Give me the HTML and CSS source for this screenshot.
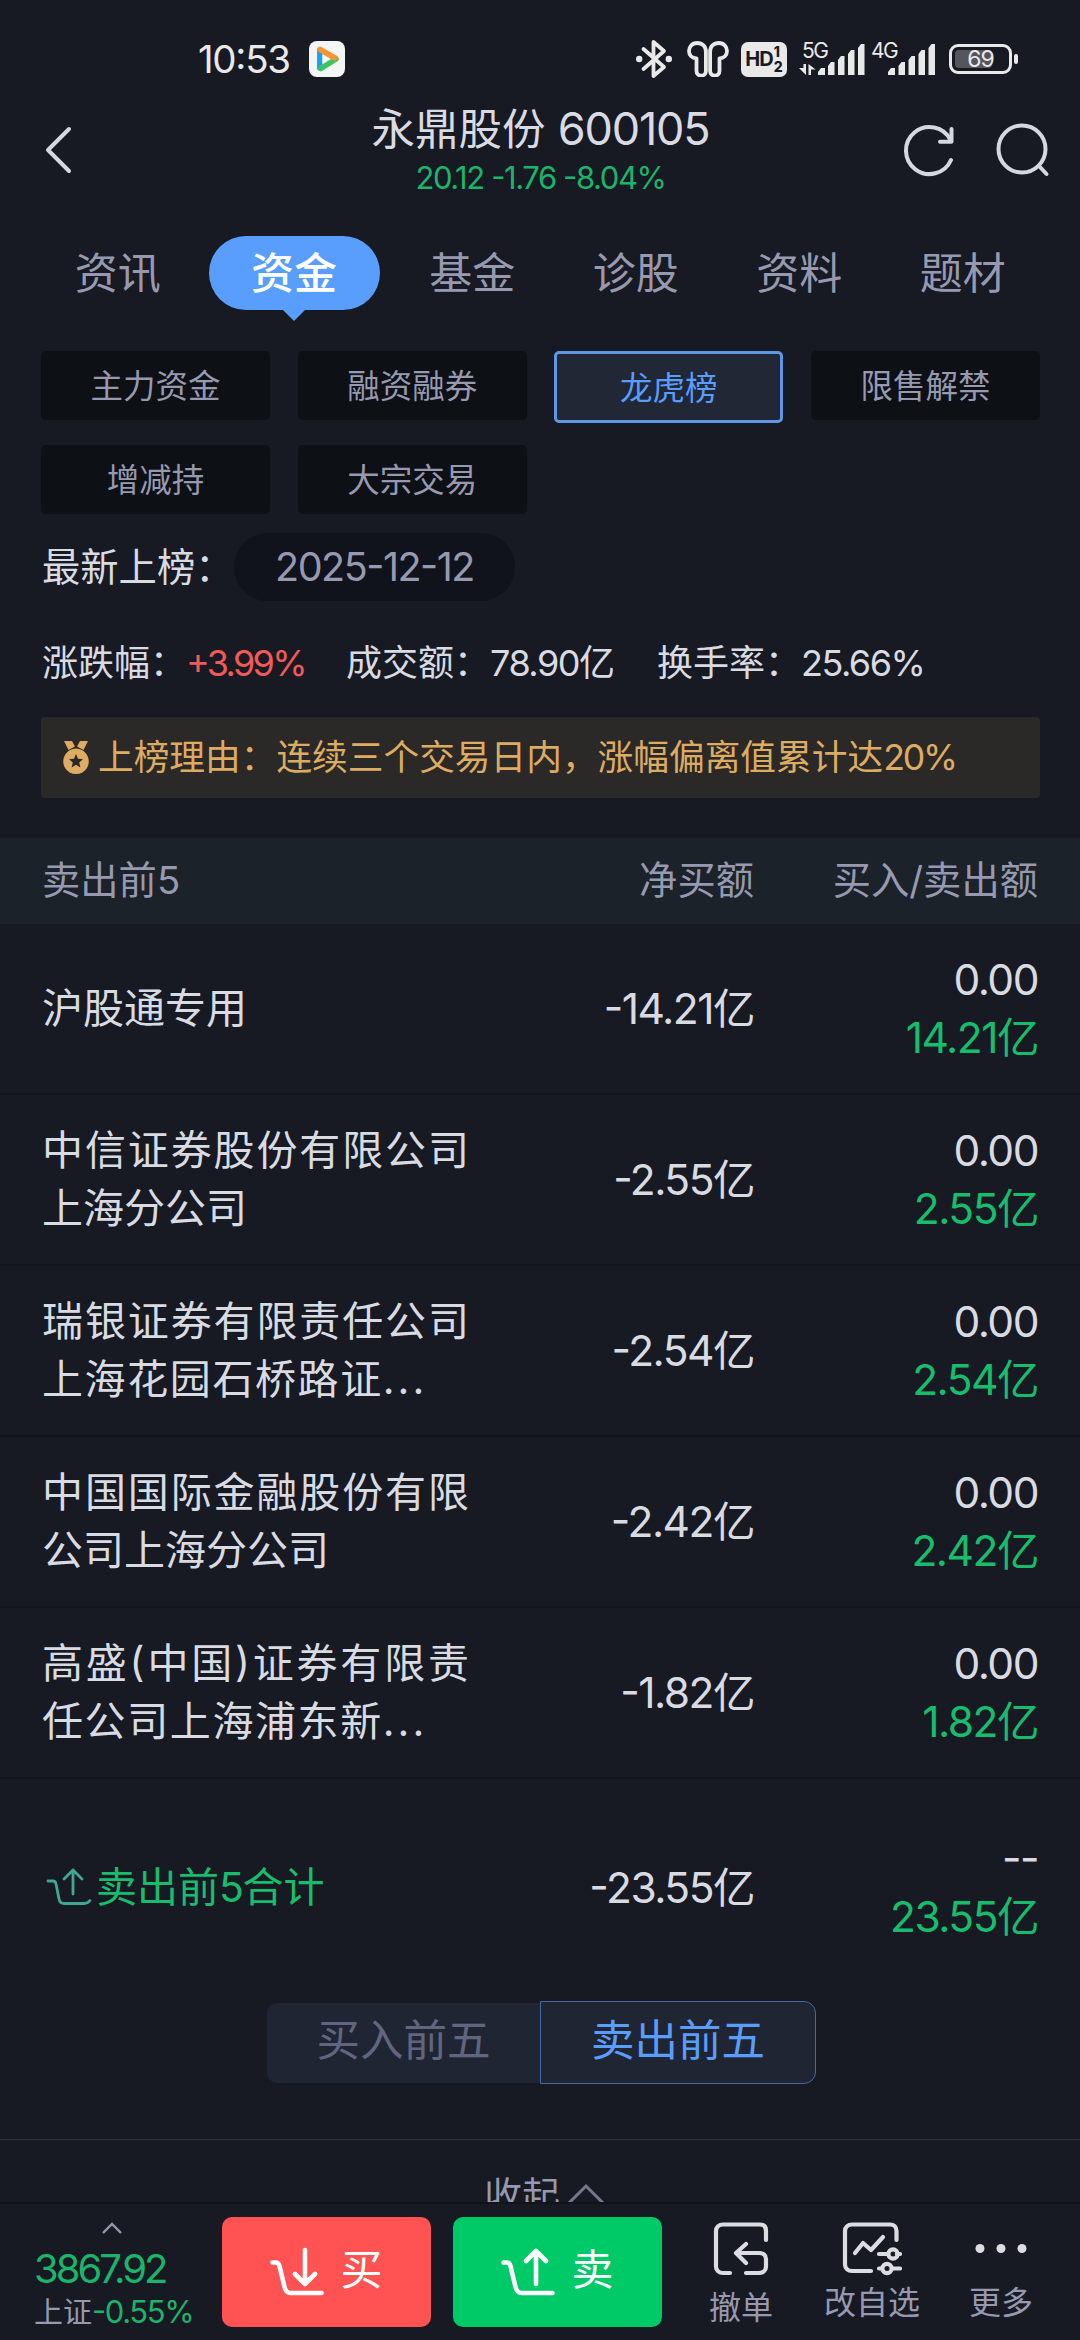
FILE: index.html
```html
<!DOCTYPE html>
<html lang="zh-CN">
<head>
<meta charset="utf-8">
<title>永鼎股份 600105</title>
<link rel="stylesheet" href="styles.css">
</head>
<body>
<div class="screen">
  <div class="status">
    <span class="clock">10:53</span>
    <svg class="app-icon" width="36" height="36" viewBox="0 0 36 36">
      <rect width="36" height="36" rx="8" fill="#f3f5f7"/>
      <path d="M10.800 9v18" stroke="#1ba0f5" stroke-width="5.500" stroke-linecap="round"/>
      <path d="M12 27.500L27 18" stroke="#3cc45e" stroke-width="5.500" stroke-linecap="round"/>
      <path d="M11 8.500L26 17" stroke="#f59433" stroke-width="5.500" stroke-linecap="round"/>
      <path d="M13.500 13.500v9l7-4.500z" fill="#fff"/>
    </svg>
    <div class="status-right">
      <svg class="bt" width="36" height="40" viewBox="0 0 36 40" fill="none" stroke="#e9e9e9" stroke-width="3.800" stroke-linejoin="round" stroke-linecap="round">
        <path d="M7.500 10L28 28 17.500 37V3L28 12 7.500 30"/>
        <circle cx="3.200" cy="20" r="3.200" fill="#e9e9e9" stroke="none"/><circle cx="32.800" cy="20" r="3.200" fill="#e9e9e9" stroke="none"/>
      </svg>
      <svg class="buds" width="42" height="36" viewBox="0 0 42 36" fill="none" stroke="#e9e9e9" stroke-width="3.800" stroke-linejoin="round">
        <path d="M10 2C5 2 2 5.800 2 10s3 7.300 7.500 7.300V30a4.700 4.700 0 0 0 9.400 0V11C18.900 5.500 15.500 2 10 2z"/>
        <path d="M32 2c5 0 8 3.800 8 8s-3 7.300-7.500 7.300V30a4.700 4.700 0 0 1-9.400 0V11C23.100 5.500 26.500 2 32 2z"/>
      </svg>
      <span class="hd"><b>HD</b><span class="hd-num"><i>1</i><i>2</i></span></span>
      <svg class="signal" width="138" height="36" viewBox="0 0 138 36" fill="#e9e9e9">
        <text x="3" y="17" class="net">5G</text>
        <path d="M0 27h4.500V23h2.500v11zM9.500 23l7 5.500h-4.500V34h-2.500z"/>
        <path d="M19 34v-3l3-4h4v7zM29 34V25l3-4h3.500v13zM39 34V19l3-4h3.500v19zM49 34V13l3-4h3.500v25zM59 34V7l3-4h3.500v31z"/>
        <text x="72" y="17" class="net">4G</text>
        <path d="M89 34v-3l3-4h4v7zM99.500 34V25l3-4h3.500v13zM109.500 34V19l3-4h3.500v19zM119.500 34V13l3-4h3.500v25zM129.500 34V7l3-4h3.500v31z"/>
      </svg>
      <span class="battery"><span class="level"></span><span class="pct">69</span></span><span class="nub"></span>
    </div>
  </div>

  <header class="header">
    <svg class="back" width="28" height="50" viewBox="0 0 28 50" fill="none" stroke="#d5d8e0" stroke-width="4" stroke-linecap="round" stroke-linejoin="round"><path d="M24 4L3 25l21 21"/></svg>
    <div class="heading">
      <h1 class="title">永鼎股份 <span class="code">600105</span></h1>
      <p class="quote">20.12 -1.76 -8.04%</p>
    </div>
    <svg class="refresh" width="54" height="54" viewBox="0 0 54 54" fill="none" stroke="#d5d8e0" stroke-width="4" stroke-linecap="round" stroke-linejoin="round"><path d="M49 37A23.500 23.500 0 1 1 48.500 17"/><path d="M49.500 6v12.800H38"/></svg>
    <svg class="search" width="54" height="54" viewBox="0 0 54 54" fill="none" stroke="#d5d8e0" stroke-width="4" stroke-linecap="round"><circle cx="26" cy="26" r="23.500"/><path d="M43 43l7.500 8"/></svg>
  </header>

  <nav class="tabs">
    <a class="tab">资讯</a>
    <a class="tab active">资金</a>
    <a class="tab">基金</a>
    <a class="tab">诊股</a>
    <a class="tab">资料</a>
    <a class="tab">题材</a>
  </nav>

  <div class="chips">
    <span class="chip">主力资金</span>
    <span class="chip">融资融券</span>
    <span class="chip selected">龙虎榜</span>
    <span class="chip">限售解禁</span>
    <span class="chip">增减持</span>
    <span class="chip">大宗交易</span>
  </div>

  <div class="latest"><span class="latest-label">最新上榜：</span><span class="date">2025-12-12</span></div>

  <div class="stats">
    <div class="stat s1">涨跌幅：<span class="num red">+3.99%</span></div>
    <div class="stat s2">成交额：<span class="num">78.90亿</span></div>
    <div class="stat s3">换手率：<span class="num">25.66%</span></div>
  </div>

  <div class="reason">
    <svg class="medal" width="27" height="34" viewBox="0 0 27 34" fill="#deab63">
      <path d="M1 0h8l3 5.500-6.500 3.500zM25 0h-8l-3 5.500L20.500 9z"/>
      <path fill-rule="evenodd" d="M13 7.500a12.800 12.800 0 1 0 .01 0zM13 13l2 4.800 5 .4-3.800 3.300 1.200 5-4.400-2.700-4.400 2.700 1.200-5L6 18.200l5-.4z"/>
    </svg>
    <span class="reason-text">上榜理由：连续三个交易日内，涨幅偏离值累计达<span class="num">20%</span></span>
  </div>

  <div class="table">
    <div class="thead"><span class="name">卖出前<span class="num">5</span></span><span class="net-col">净买额</span><span class="amt-col">买入/卖出额</span></div>
    <div class="row"><div class="name">沪股通专用</div><div class="net-col">-14.21亿</div><div class="amt-col">0.00<br><span class="green">14.21亿</span></div></div>
    <div class="row"><div class="name">中信证券股份有限公司上海分公司</div><div class="net-col">-2.55亿</div><div class="amt-col">0.00<br><span class="green">2.55亿</span></div></div>
    <div class="row"><div class="name">瑞银证券有限责任公司<span class="clipped">上海花园石桥路证<span class="dots">...</span></span></div><div class="net-col">-2.54亿</div><div class="amt-col">0.00<br><span class="green">2.54亿</span></div></div>
    <div class="row"><div class="name">中国国际金融股份有限公司上海分公司</div><div class="net-col">-2.42亿</div><div class="amt-col">0.00<br><span class="green">2.42亿</span></div></div>
    <div class="row"><div class="name">高盛(中国)证券有限责<span class="clipped">任公司上海浦东新<span class="dots">...</span></span></div><div class="net-col">-1.82亿</div><div class="amt-col">0.00<br><span class="green">1.82亿</span></div></div>
    <div class="row total">
      <div class="name green">
        <svg class="sum-icon" width="46" height="40" viewBox="0 0 46 40" fill="none" stroke="#3fa793" stroke-width="2.800" stroke-linecap="round" stroke-linejoin="round"><path d="M2 13h5c2 0 2.600 1 3 3l3 15c.6 3 2 4.500 5 4.500h20c3 0 4.500-1 6-3M27 26V2M18 11l9-9 9 9"/></svg><span>卖出前<span class="num">5</span>合计</span>
      </div>
      <div class="net-col">-23.55亿</div><div class="amt-col">--<br><span class="green">23.55亿</span></div>
    </div>
  </div>

  <div class="segment"><span class="seg">买入前五</span><span class="seg on">卖出前五</span></div>

  <div class="collapse"><span>收起</span><svg class="up" width="40" height="24" viewBox="0 0 40 24" fill="none" stroke="#75778c" stroke-width="3"><path d="M1 21L19 3l18 18"/></svg></div>

  <footer class="bar">
    <div class="index">
      <svg class="caret" width="22" height="12" viewBox="0 0 22 12" fill="none" stroke="#9497ae" stroke-width="2.400"><path d="M2 11l9-9 9 9"/></svg>
      <div class="index-val">3867.92</div>
      <div class="index-chg">上证<span class="pctchg">-0.55%</span></div>
    </div>
    <div class="btn buy"><svg width="54" height="50" viewBox="0 0 54 50" fill="none" stroke="#fff" stroke-width="4.600" stroke-linecap="round" stroke-linejoin="round"><path d="M2.500 15.500h3c3 0 3.500 1.500 4 3.500l5 21c1 4 2.500 6 6 6h31M35 3v34M25 27l10 10 10-10"/></svg><span>买</span></div>
    <div class="btn sell"><svg width="54" height="50" viewBox="0 0 54 50" fill="none" stroke="#fff" stroke-width="4.600" stroke-linecap="round" stroke-linejoin="round"><path d="M2.500 15.500h3c3 0 3.500 1.500 4 3.500l5 21c1 4 2.500 6 6 6h31M35 37V4M25 14L35 4l10 10"/></svg><span>卖</span></div>
    <div class="tool t1"><svg width="58" height="54" viewBox="0 0 58 54" fill="none" stroke="#dcdde2" stroke-width="4.200" stroke-linecap="round" stroke-linejoin="round"><path d="M18 51h-7c-4 0-7-2.500-7-6.500V9c0-4 3-6.500 7-6.500h37c4 0 6 2.500 6 6.500v9M34 51h13c4 0 7-2.500 7-6.500V37c0-4-3-6-7-6H25M34 22l-10 9 10 10"/></svg><span>撤单</span></div>
    <div class="tool t2"><svg width="60" height="54" viewBox="0 0 60 54" fill="none" stroke="#dcdde2" stroke-width="4.200" stroke-linecap="round" stroke-linejoin="round"><path d="M29 49H10c-4 0-7-2.500-7-6.500V9c0-4 3-6.500 7-6.500h38c4 0 6.500 2.500 6.500 6.500v9M13 31l8-10 8 7 12-13"/><path d="M37 32h9M55 32h3M37 46.500h3M50 46.500h8"/><circle cx="51" cy="32" r="4.600"/><circle cx="45" cy="46.500" r="4.600"/></svg><span>改自选</span></div>
    <div class="tool t3"><svg width="60" height="54" viewBox="0 0 60 54" fill="#dcdde2"><circle cx="9" cy="26.500" r="4.500"/><circle cx="30" cy="26.500" r="4.500"/><circle cx="51" cy="26.500" r="4.500"/></svg><span>更多</span></div>
  </footer>
</div>
</body>
</html>
```
FILE: styles.css
```css
* { box-sizing: border-box; margin: 0; padding: 0; }
body { background: #171a22; font-family: "Inter", "Noto Sans CJK SC", sans-serif; font-feature-settings: "case" 1; color: #d9dbe3; }
svg { display: block; flex: none; }
.screen { width: 1080px; height: 2340px; overflow: hidden; display: flex; flex-direction: column; background: #171a22; white-space: nowrap; }
.screen > * { flex: none; }
.green { color: #17bd6c; }
.red { color: #f25a58; }
.num { letter-spacing: -1.500px; }

.status { height: 100px; padding: 18px 62px 0 198px; display: flex; align-items: center; color: #e9e9e9; }
.clock { font-size: 38.500px; letter-spacing: -1.300px; width: 111px; }
.status-right { margin-left: auto; display: flex; align-items: center; }
.bt { margin-right: 15px; }
.buds { margin-right: 12px; }
.hd { width: 46px; height: 35px; border-radius: 7px; background: #e9e9e9; color: #171a22; display: flex; align-items: center; justify-content: center; gap: 1px; margin-right: 12px; }
.hd b { font-size: 20px; letter-spacing: -1px; }
.hd-num { display: flex; flex-direction: column; font-size: 14px; line-height: 15px; font-weight: 800; }
.hd-num i { font-style: normal; }
.net { font-size: 21px; letter-spacing: -1.500px; }
.signal { margin-right: 12px; overflow: visible; }
.battery { width: 63px; height: 30px; border: 3px solid #e9e9e9; border-radius: 9px; padding: 3px; display: grid; align-items: center; }
.level { grid-area: 1 / 1; width: 37px; height: 18px; background: #54565c; border-radius: 4px; }
.pct { grid-area: 1 / 1; text-align: center; font-size: 23px; line-height: 18px; letter-spacing: -1px; }
.nub { width: 4px; height: 10px; margin-left: 2px; border-radius: 2px; background: #e9e9e9; }

.header { height: 100px; padding: 0 30px 0 45px; display: flex; align-items: center; }
.heading { flex: 1; padding: 6px 0 0 106px; text-align: center; }
.title { font-size: 43.500px; line-height: 50px; font-weight: 400; }
.code { font-size: 45px; letter-spacing: -1.200px; }
.quote { font-size: 31px; line-height: 48px; color: #1cb46b; letter-spacing: -1.400px; }
.refresh { margin-right: 40px; }

.tabs { height: 151px; padding: 36px 0 0 36px; display: flex; align-items: flex-start; }
.tab { height: 74px; width: 163.500px; padding-bottom: 7px; display: flex; align-items: center; justify-content: center; font-size: 43px; color: #9799b0; }
.active { position: relative; width: 171px; margin: 0 11px 0 9px; background: #599dfd; color: #fff; border-radius: 37px; font-weight: 500; }
.active::after { content: ""; position: absolute; left: 73px; top: 73px; border: 12.500px solid transparent; border-top: 12px solid #599dfd; border-bottom: 0; }

.chips { padding: 0 40px 0 41px; display: grid; grid-template-columns: repeat(4, 1fr); column-gap: 27.500px; row-gap: 25px; grid-auto-rows: 69px; font-size: 32.500px; color: #9799b0; }
.chip { background: #0d1014; border-radius: 5px; padding-bottom: 4px; display: flex; align-items: center; justify-content: center; }
.selected { height: 72px; background: #212735; border: 3px solid #5f97e6; color: #599dfd; }

.latest { margin-top: 19px; height: 68px; padding-left: 42px; display: flex; align-items: center; }
.latest-label { width: 192px; font-size: 38.300px; padding-bottom: 5px; }
.date { width: 281px; height: 68px; border-radius: 34px; background: #10131b; display: flex; align-items: center; justify-content: center; font-size: 39.500px; letter-spacing: -1.500px; color: #9799b0; }

.stats { margin-top: 39px; height: 40px; padding-left: 42px; display: flex; align-items: center; font-size: 36px; }
.s1 { width: 304px; }
.s2 { width: 311px; }
.stats .red { letter-spacing: -2.700px; }

.reason { margin: 37px 40px 0 41px; height: 81px; padding-left: 22px; border-radius: 4px; background: #2b2927; color: #deab63; font-size: 35.700px; display: flex; align-items: center; gap: 8px; }
.reason-text { padding-bottom: 7px; }
.reason .num { letter-spacing: -2.200px; }

.table { margin-top: 40px; }
.thead, .row { display: grid; grid-template-columns: 427px 1fr 284px; align-items: center; padding: 0 42px 0 42px; }
.thead { height: 86px; padding-bottom: 7px; background: #1b2229; color: #9799b0; font-size: 38.300px; }
.row { height: 171px; border-bottom: 2px solid #12151b; font-size: 41px; line-height: 57.500px; }
.row .name { white-space: normal; text-align: justify; overflow-wrap: anywhere; }
.row .name .clipped { letter-spacing: 1.600px; }
.dots { letter-spacing: 3px; }
.net-col, .amt-col { text-align: right; }
.row .net-col, .row .amt-col { font-size: 42.500px; letter-spacing: -1.500px; }
.total { height: 218px; border-bottom: 0; }
.total .name { display: flex; align-items: center; white-space: nowrap; gap: 4px; padding-left: 4px; }

.segment { margin-top: 4px; height: 83px; display: flex; align-items: center; padding-left: 267px; font-size: 43.500px; }
.seg { width: 273px; height: 80px; padding-bottom: 11px; border-radius: 10px 0 0 10px; background: #202533; color: #626580; display: flex; align-items: center; justify-content: center; }
.on { width: 276px; height: 83px; border: 1.500px solid #456a9e; border-radius: 0 12px 12px 0; color: #599dfd; }

.collapse { margin-top: 55px; height: 63px; border-top: 1px solid #30333b; overflow: hidden; display: flex; padding-left: 484px; font-size: 38px; line-height: 110px; color: #9799b0; }
.up { margin: 43px 0 0 7px; }

.bar { height: 138px; border-top: 2px solid #11141a; display: flex; padding-left: 34px; }
.index { width: 188px; color: #1cb46b; }
.caret { margin: 18px 0 0 67px; }
.index-val { font-size: 40px; line-height: 48px; margin-top: 11px; letter-spacing: -3px; }
.index-chg { font-size: 29px; line-height: 40px; color: #9799b0; margin-top: -1px; }
.pctchg { font-size: 31px; letter-spacing: -1.400px; color: #1cb46b; }
.btn { margin-top: 13px; width: 209px; height: 110px; border-radius: 10px; display: flex; align-items: center; justify-content: center; gap: 16px; color: #fff; font-size: 42px; }
.btn span { padding-bottom: 11px; }
.buy { background: #ff5252; }
.sell { background: #00c968; margin-left: 22px; }
.tool { display: flex; flex-direction: column; align-items: center; padding-top: 18px; font-size: 32px; line-height: 44px; color: #9799b0; }
.t1 { width: 80px; margin-left: 39px; }
.t1 span { margin-top: 10px; }
.t2 { width: 100px; margin-left: 41px; }
.t3 { width: 70px; margin-left: 44px; }
.t2 span, .t3 span { margin-top: 5px; }
```
